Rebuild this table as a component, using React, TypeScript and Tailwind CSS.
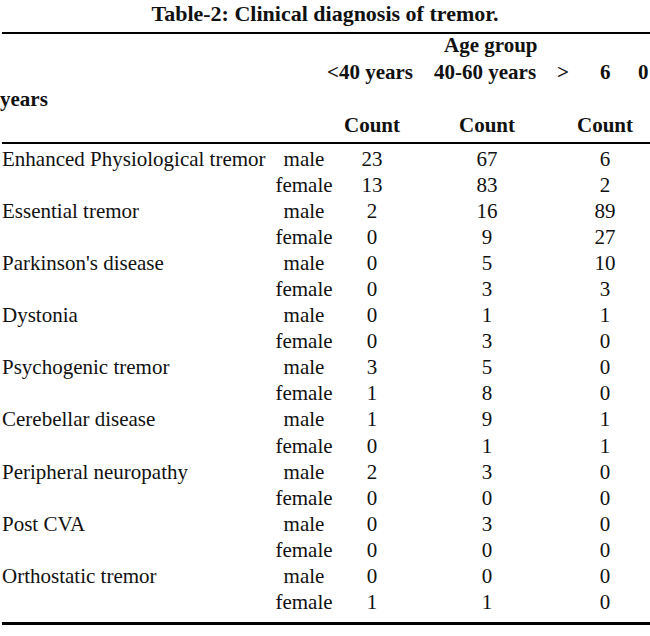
const rows: [string, string, number, number, number][] = [
  ["Enhanced Physiological tremor", "male", 23, 67, 6],
  ["", "female", 13, 83, 2],
  ["Essential tremor", "male", 2, 16, 89],
  ["", "female", 0, 9, 27],
  ["Parkinson's disease", "male", 0, 5, 10],
  ["", "female", 0, 3, 3],
  ["Dystonia", "male", 0, 1, 1],
  ["", "female", 0, 3, 0],
  ["Psychogenic tremor", "male", 3, 5, 0],
  ["", "female", 1, 8, 0],
  ["Cerebellar disease", "male", 1, 9, 1],
  ["", "female", 0, 1, 1],
  ["Peripheral neuropathy", "male", 2, 3, 0],
  ["", "female", 0, 0, 0],
  ["Post CVA", "male", 0, 3, 0],
  ["", "female", 0, 0, 0],
  ["Orthostatic tremor", "male", 0, 0, 0],
  ["", "female", 1, 1, 0],
];

const cols = "grid grid-cols-[270px_68px_68px_162px_74px]";

export default function App() {
  return (
    <div className="w-[650px] h-[636px] bg-white text-[#111] font-['Liberation_Serif','Times_New_Roman',serif]">
      {/* title */}
      <div className="h-[28px] flex items-center justify-center text-[22px] font-bold leading-none">
        Table-2: Clinical diagnosis of tremor.
      </div>
      <div className="mt-[4px] ml-[2px] h-[2px] bg-black" />

      {/* header */}
      <div className="font-bold text-[21px]">
        <div className="h-[22px] flex items-center pl-[444px] leading-none">Age group</div>
        <div className="h-[32px] flex items-center leading-none whitespace-nowrap">
          <span className="ml-[327px] w-[107px]">&lt;40 years</span>
          <span className="w-[123px]">40-60 years</span>
          <span className="w-[43px]">&gt;</span>
          <span className="w-[38px]">6</span>
          <span>0</span>
        </div>
        <div className="h-[22px] flex items-center leading-none">years</div>
        <div className={`${cols} mt-[2px] h-[26px] items-center leading-none`}>
          <span />
          <span />
          <span className="text-center">Count</span>
          <span className="text-center">Count</span>
          <span className="text-center">Count</span>
        </div>
      </div>
      <div className="mt-[4px] ml-[2px] h-[2px] bg-black" />

      {/* body */}
      <div className="pt-[2px] text-[21px]">
        {rows.map((r, i) => (
          <div key={i} className={`${cols} h-[26.1px] items-center leading-none`}>
            <span className="pl-[2px] whitespace-nowrap">{r[0]}</span>
            <span className="text-center">{r[1]}</span>
            <span className="text-center">{r[2]}</span>
            <span className="text-center">{r[3]}</span>
            <span className="text-center">{r[4]}</span>
          </div>
        ))}
      </div>
      <div className="mt-[6px] ml-[2px] h-[3px] bg-black" />
    </div>
  );
}
